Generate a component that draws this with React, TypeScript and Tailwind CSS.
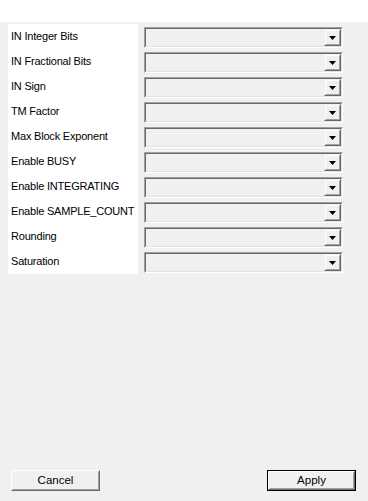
import React from "react";

const labels = [
  "IN Integer Bits",
  "IN Fractional Bits",
  "IN Sign",
  "TM Factor",
  "Max Block Exponent",
  "Enable BUSY",
  "Enable INTEGRATING",
  "Enable SAMPLE_COUNT",
  "Rounding",
  "Saturation",
];

function Combo() {
  return (
    <div className="h-[21px] w-[199px] border border-t-[#a0a0a0] border-l-[#a0a0a0] border-b-white border-r-white">
      <div className="flex h-full justify-end border border-t-[#696969] border-l-[#696969] border-b-[#e3e3e3] border-r-[#e3e3e3] bg-[#f0f0f0]">
        <div className="h-full w-[17px] border border-t-[#f0f0f0] border-l-[#f0f0f0] border-b-[#696969] border-r-[#696969]">
          <div className="flex h-full w-full items-center justify-center border border-t-white border-l-white border-b-[#a0a0a0] border-r-[#a0a0a0] bg-[#f0f0f0]">
            <svg width="7" height="4" viewBox="0 0 7 4">
              <path d="M0 0H7L3.5 4Z" fill="#000" />
            </svg>
          </div>
        </div>
      </div>
    </div>
  );
}

function WinButton({ label, isDefault }: { label: string; isDefault?: boolean }) {
  const inner = (
    <div className="h-full w-full border border-t-white border-l-white border-b-[#696969] border-r-[#696969]">
      <div className="flex h-full w-full items-center justify-center border border-t-[#f0f0f0] border-l-[#f0f0f0] border-b-[#a0a0a0] border-r-[#a0a0a0] bg-[#f0f0f0] text-[11.5px] text-black">
        {label}
      </div>
    </div>
  );
  if (isDefault) {
    return <div className="h-[21px] w-[89px] border border-black">{inner}</div>;
  }
  return <div className="h-[21px] w-[89px]">{inner}</div>;
}

export default function App() {
  return (
    <div
      className="h-[501px] w-[368px] overflow-hidden bg-white"
      style={{ fontFamily: '"Liberation Sans", Arial, sans-serif' }}
    >
      <div className="h-[22px]" />
      <div className="flex h-[479px] flex-col bg-[#f0f0f0]">
        <div className="flex pl-[8px] pt-[2px]">
          <div className="w-[130px] bg-white">
            {labels.map((l) => (
              <div
                key={l}
                className="flex h-[25px] items-center whitespace-nowrap pl-[3px] text-[11px] tracking-[-0.2px] text-black"
              >
                {l}
              </div>
            ))}
          </div>
          <div className="ml-[6px] flex flex-col">
            {labels.map((l) => (
              <div key={l} className="h-[25px] pt-[3px]">
                <Combo />
              </div>
            ))}
          </div>
        </div>
        <div className="flex-1" />
        <div className="flex justify-between pb-[10px] pl-[11px] pr-[12px]">
          <WinButton label="Cancel" />
          <WinButton label="Apply" isDefault />
        </div>
      </div>
    </div>
  );
}
